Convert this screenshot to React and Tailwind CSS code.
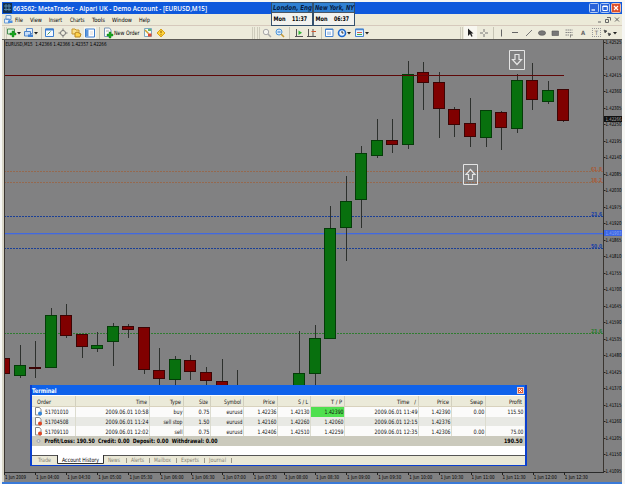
import React from "react";

// Candles: [center x, high, body top, body bottom, low, up?]
const candles = [
  [4.5, 355, 358, 373, 384, 0],
  [20, 345, 365, 375, 378, 1],
  [35.5, 341, 367, 368, 378, 0],
  [51, 308, 315, 367, 367, 1],
  [66.5, 304, 315, 335, 338, 0],
  [82, 334, 334, 346, 358, 0],
  [97.5, 332, 345, 348, 352, 1],
  [113, 323, 326, 341, 366, 1],
  [128.5, 324, 326, 329, 338, 0],
  [144, 327, 327, 369, 374, 0],
  [159.5, 348, 370, 378, 385, 0],
  [175.5, 356, 359, 379, 385, 1],
  [190.5, 355, 360, 371, 380, 0],
  [206, 367, 372, 380, 386, 0],
  [222, 359, 381, 387, 388, 0],
  [237.5, 370, 386, 388, 388, 0],
  [299.5, 331, 373, 388, 388, 1],
  [315, 325, 338, 373, 388, 1],
  [330.5, 206, 228, 338, 338, 1],
  [346, 176, 201, 227, 261, 1],
  [361.5, 146, 153, 199, 228, 1],
  [377, 119, 140, 155, 158, 1],
  [392.5, 119, 140, 144, 153, 0],
  [408, 61, 74, 144, 149, 1],
  [423.5, 62, 72, 82, 110, 0],
  [439, 72, 82, 108, 138, 0],
  [454.5, 107, 109, 124, 137, 0],
  [470.5, 98, 123, 136, 147, 0],
  [486, 110, 110, 137, 147, 1],
  [501.5, 111, 112, 127, 150, 0],
  [517, 74, 80, 128, 133, 1],
  [532.5, 63, 80, 99, 110, 0],
  [548, 81, 90, 101, 104, 1],
  [563.5, 89, 89, 120, 122, 0],
];

const levels = [
  { y: 171, label: "61.8", color: "#a85c38", line: "#95694f" },
  { y: 182, label: "38.2", color: "#a85c38", line: "#95694f" },
  { y: 216, label: "23.6", color: "#1a3fa8", line: "#1a3f96" },
  { y: 248, label: "50.0", color: "#1a3fa8", line: "#1a3f96" },
  { y: 333, label: "23.6", color: "#2c7a2c", line: "#2f7c30" },
];

const prices = Array.from({ length: 27 }, (_, i) => (1.42525 - i * 0.00055).toFixed(5));

const times = [
  "1 Jun 2009", "1 Jun 04:00", "1 Jun 04:30", "1 Jun 05:00", "1 Jun 05:30", "1 Jun 06:00", "1 Jun 06:30",
  "1 Jun 07:00", "1 Jun 07:30", "1 Jun 08:00", "1 Jun 08:30", "1 Jun 09:00", "1 Jun 09:30", "1 Jun 10:00",
  "1 Jun 10:30", "1 Jun 11:00", "1 Jun 11:30", "1 Jun 12:00", "1 Jun 12:30",
];

const orders = [
  ["51701010", "2009.06.01 10:58", "buy", "0.75", "eurusd", "1.42236", "1.42130", "1.42390", "2009.06.01 11:49", "1.42390", "0.00", "115.50"],
  ["51704508", "2009.06.01 11:24", "sell stop", "1.50", "eurusd", "1.42160", "1.42260", "1.42060", "2009.06.01 12:15", "1.42376", "", ""],
  ["51709110", "2009.06.01 12:02", "sell", "0.75", "eurusd", "1.42406", "1.42510", "1.42259", "2009.06.01 12:35", "1.42306", "0.00", "75.00"],
];

const columns = ["Order", "Time", "Type", "Size", "Symbol", "Price", "S / L", "T / P", "Time   /", "Price", "Swap", "Profit"];
const gridCols = "grid grid-cols-[43px_74px_34px_27px_33px_34px_33px_34px_74px_33px_34px_39px]";

const T = ({ x, y, children, size = 6, w, ...rest }) => (
  <text x={x} y={y} fontSize={size} textLength={w} lengthAdjust="spacingAndGlyphs" {...rest}>
    {children}
  </text>
);

const Icon = ({ children, className = "" }) => (
  <svg width="12" height="12" viewBox="0 0 12 12" className={`shrink-0 ${className}`} fill="none">
    {children}
  </svg>
);

const Caret = ({ className = "" }) => (
  <svg width="4" height="12" viewBox="0 0 4 12" className={`shrink-0 ${className}`}>
    <path d="M0 5h4l-2 2.4z" fill="#222" />
  </svg>
);

const Plus = ({ x, y }) => (
  <path d={`M${x} ${y + 2}h2v-2h2v2h2v2h-2v2h-2v-2h-2z`} fill="#19a51d" stroke="#0d8212" strokeWidth=".4" />
);

const Grip = ({ className = "" }) => <div className={`h-3 w-[3px] shrink-0 border-x border-[#cfcdbd] ${className}`} />;
const Sep = ({ className = "" }) => <div className={`h-3 w-px shrink-0 bg-[#c6c4b4] ${className}`} />;

const TitleBar = () => (
  <div className="flex h-3 items-center bg-[#0f59dc] px-px text-white">
    <svg width="9" height="10" viewBox="0 0 9 10" className="shrink-0">
      <rect width="9" height="10" fill="#12304f" />
      <path d="M1 3h7M1 6.5h7M3 1v7M6 1v7" stroke="#5e8fae" strokeWidth=".9" />
    </svg>
    <svg width="240" height="12" className="shrink-0 overflow-visible font-['Open_Sans',sans-serif] font-semibold" fill="white">
      <T x="1" y="8.6" size="7.2" w="194" style={{ whiteSpace: "pre" }}>663562: MetaTrader - Alpari UK - Demo Account - [EURUSD,M15]</T>
    </svg>
    <div className="ml-auto flex gap-[1px]">
      <svg width="10" height="10" viewBox="0 0 10 10"><rect x=".5" y=".5" width="9" height="9" rx="1" fill="#2a62d8" stroke="#b4cdf5" /><path d="M2.5 7h3.5" stroke="#fff" strokeWidth="1.3" /></svg>
      <svg width="10" height="10" viewBox="0 0 10 10"><rect x=".5" y=".5" width="9" height="9" rx="1" fill="#2a62d8" stroke="#b4cdf5" /><path d="M2.8 3h4.5v4.5H2.8zM2.8 3.5h4.5" stroke="#fff" fill="none" /></svg>
      <svg width="10" height="10" viewBox="0 0 10 10"><rect x=".5" y=".5" width="9" height="9" rx="1" fill="#dc4f2c" stroke="#f2c1ae" /><path d="M3 3l4 4M7 3l-4 4" stroke="#fff" strokeWidth="1.2" /></svg>
    </div>
  </div>
);

const MenuBar = () => (
  <div className="flex h-[11px] items-center bg-[#ecead8] text-black">
    <svg width="9" height="9" viewBox="0 0 9 9" className="ml-0.5">
      <path d="M2 .5h5v4H2zM.5 4h5v4h-5z" fill="#e4eefa" stroke="#6b9bd4" />
      <path d="M4 5.5h4.5V8H4z" fill="#4c8fe0" />
    </svg>
    <svg width="150" height="11" className="shrink-0 overflow-visible">
      <T x="2" y="7.6" w="8">File</T>
      <T x="17" y="7.6" w="12">View</T>
      <T x="36" y="7.6" w="13">Insert</T>
      <T x="57" y="7.6" w="14.5">Charts</T>
      <T x="79" y="7.6" w="13">Tools</T>
      <T x="99" y="7.6" w="20">Window</T>
      <T x="126" y="7.6" w="11">Help</T>
    </svg>
    <svg width="25" height="9" viewBox="0 0 25 9" className="ml-auto mr-px" fill="none" stroke="#666">
      <path d="M2 7h3M11 2.5h3.5v3M9.5 4.5h3v3h-3zM19 2.5l4 4M23 2.5l-4 4" />
    </svg>
  </div>
);

const Toolbar = () => (
  <div className="flex h-[15px] items-center border-t border-b border-t-[#d6c9bc] border-b-[#5c5a55] bg-[#edebdb] pl-0.5 text-black">
    <div className="flex w-[248px] shrink-0 items-center">
      <Grip />
      <Icon className="-ml-px"><path d="M1.5 2h7v5h-7z" fill="#d9f0d8" stroke="#4b8f56" /><Plus x={4} y={4} /></Icon>
      <Caret className="-ml-px" />
      <Icon className="ml-0.5"><path d="M3.5 1.5h6v5h-6z" fill="#e5effa" stroke="#6390c8" /><path d="M1.5 4.5h6v4.5h-6z" fill="#c8def7" stroke="#4d85c9" /><path d="M5 7.5h5v2.5H5z" fill="#3e7fd0" /></Icon>
      <Caret className="-ml-px" />
      <Sep className="mr-0.5 ml-[3px]" />
      <Icon><path d="M1.5 2h8v7.5h-8z" fill="#f3f8ff" stroke="#3c7fcf" /><path d="M1.5 2.5h8" stroke="#3c7fcf" strokeWidth="2" /><path d="M3.5 7.5l3-3" stroke="#4d9b54" /></Icon>
      <Icon className="ml-px"><path d="M6 1.5v9M1.5 6h9" stroke="#777" /><circle cx="6" cy="6" r="2.5" fill="#f1efdf" stroke="#777" /></Icon>
      <Icon className="ml-0.5"><path d="M1 2h3l1 1h3v4H1z" fill="#f8df8b" stroke="#c7962c" /><path d="M4 6l2-1 4 2-1 3H4z" fill="#ffd34b" stroke="#b9851e" /></Icon>
      <div className="ml-px flex bg-[#f8f7f0]">
        <Icon><path d="M1.5 2h9v8h-9z" fill="#fff" stroke="#3c7fcf" /><path d="M2 2.5h2.5v7H2z" fill="#5c96dc" /><path d="M6 5h3M6 7h3" stroke="#c8c8c8" strokeWidth=".7" /></Icon>
      </div>
      <Sep className="mr-0.5 ml-[3px]" />
      <Icon><path d="M2.5 1h5l1.5 2v6.5H2.5z" fill="#fafafa" stroke="#7896b5" /><path d="M4 4h3" stroke="#aaa" /><Plus x={5} y={5} /></Icon>
      <svg width="28" height="12" className="shrink-0 overflow-visible"><T x="0" y="8.2" w="25.5">New Order</T></svg>
      <Icon><path d="M2.5 1.5h7v8h-7z" fill="#f5faf5" stroke="#7da8bf" /><path d="M3 3l3.5 3.5" stroke="#d0a12a" strokeWidth="1.5" /><path d="M6 6.5h3.5v3H6z" fill="#de4a31" /><path d="M6 3h3" stroke="#31a142" strokeWidth="1.5" /></Icon>
      <Icon className="ml-px"><path d="M6 2l4 4-4 4-4-4z" fill="#ffd43b" stroke="#d8a21c" /><path d="M6 3.7v2.5M6 7.3v1" stroke="#8a5b00" /></Icon>
    </div>
    <div className="flex w-[208px] shrink-0 items-center">
      <Grip />
      <Grip className="ml-0.5" />
      <Icon className="ml-px"><circle cx="5" cy="5" r="2.7" fill="#f5f5f0" stroke="#aaa" /><path d="M7 7l3 3" stroke="#aaa" strokeWidth="1.5" /></Icon>
      <Icon className="ml-px"><circle cx="5" cy="5" r="3" fill="#d8ecff" stroke="#4c96d8" /><path d="M3.5 5h3" stroke="#2f75c1" /><path d="M7 7l3 3" stroke="#c59b3a" strokeWidth="1.6" /></Icon>
      <Sep className="mx-[3px]" />
      <Icon><path d="M3.5 2v8M2 9.5h8" stroke="#555" /><path d="M5.5 3.5l3.5 2.2-3.5 2.3z" fill="#31b535" /></Icon>
      <Icon className="ml-px"><path d="M2.5 2v8M1 9.5h9M7 2v7" stroke="#555" /><path d="M10 4.5H5.5" stroke="#d05730" /></Icon>
      <Sep className="mr-px ml-[3px]" />
      <Icon><path d="M2.5 2h7.500v7.5h-7.500z" fill="#fff" stroke="#4985cf" /><path d="M2.5 2.5h7.500" stroke="#4985cf" /><path d="M5 4.5v3.5M7 4.5v3.5" stroke="#76a5dc" /></Icon>
      <Icon className="ml-px"><circle cx="6" cy="6" r="3.5" fill="#eaf4ff" stroke="#1d69ce" strokeWidth="1.6" /><path d="M6 4V6h1.5" stroke="#333" /></Icon>
      <Caret className="-ml-px" />
      <Icon className="ml-[3px]"><path d="M1.5 2h8v7.5h-8z" fill="#e8f5ff" stroke="#4985cf" /><path d="M1.5 2.5h8" stroke="#4985cf" strokeWidth="1.5" /><path d="M3 5.5h5" stroke="#d16046" /><path d="M3 7.5h5" stroke="#41a84b" /></Icon>
      <Caret className="-ml-px" />
    </div>
    <div className="flex items-center text-[#666]">
      <Grip />
      <div className="ml-px flex h-[13px] w-[13px] items-center bg-[#f8f7f0]"><Icon><path d="M4 1.5v7.500l2-2 1.400 2.800 1.200-.6L7.3 6.5h2.200z" fill="#222" /></Icon></div>
      <Icon className="ml-px"><path d="M6 2v3M6 7v3M2 6h3M7 6h3" stroke="#777" /></Icon>
      <Sep className="mr-px ml-[3px]" />
      <Icon><path d="M6.5 2.5v7" stroke="#666" /></Icon>
      <Icon className="ml-0.5"><path d="M3 5.5H9" stroke="#666" /></Icon>
      <Icon className="ml-0.5"><path d="M3 9l6-6" stroke="#777" /></Icon>
      <Icon className="ml-px"><ellipse cx="6" cy="6" rx="3.6" ry="2.3" fill="#777" stroke="#555" strokeWidth=".6" /></Icon>
      <Icon className="ml-px"><path d="M3 4h6.5v4.5h-6.500z" fill="#777" stroke="#555" strokeWidth=".6" /></Icon>
      <Icon className="ml-0.5"><path d="M2.5 3h7M2.5 5.5h7M2.5 8h4" stroke="#888" strokeDasharray="1.5 .5" /><path d="M7.5 7.5v3M7.5 8H10" stroke="#666" strokeWidth=".7" /></Icon>
      <div className="ml-0.5 w-3 text-center text-[6px] leading-3 font-bold">A</div>
      <div className="ml-[3px] h-[9px] w-[9px] border border-dotted border-[#999] text-center text-[6px] leading-[7px]">T</div>
      <Icon className="ml-px"><path d="M2 3l3 1-2 2zM6 6l3 1-2 2z" fill="#444" stroke="#444" strokeWidth=".6" /></Icon>
      <Caret className="-ml-px" />
    </div>
  </div>
);

const Clock = ({ city, time, w }) => (
  <div className="w-[42px] border border-[#34506c]">
    <svg width="40" height="22" className="block overflow-visible">
      <rect width="40" height="9" fill="#2f80d2" />
      <rect y="9" width="40" height="13" fill="#f2f2ee" />
      <path d="M0 9.5h40" stroke="#4c5560" />
      <T x="1" y="7.4" w={w} size="6.8" fontWeight="bold" fontStyle="italic" fill="#071b42">{city}</T>
      <T x="1.5" y="18.2" w="12" size="6.2" fontWeight="bold">Mon</T>
      <T x="20" y="18.2" w="15" size="6.4" fontWeight="bold">{time}</T>
    </svg>
  </div>
);

const Chart = () => (
  <svg width="600" height="432" viewBox="4 40 600 432" className="block shrink-0 bg-[#818182]">
    {levels.map((l) => (
      <g key={l.y}>
        <path d={`M4 ${l.y + 0.5}H603`} stroke={l.line} strokeDasharray="2 1" />
        <T x="591" y={l.y} w="11" size="5.4" fill={l.color} fontWeight="bold">{l.label}</T>
      </g>
    ))}
    <rect x="4" y="233" width="599" height="1" fill="#4169e1" />
    <rect x="4" y="234" width="599" height="1" fill="#4169e1" opacity=".3" />
    {candles.map(([x, high, top, bottom, low, up]) => (
      <g key={x}>
        <path d={`M${Math.floor(x) + 0.5} ${high}V${low}`} stroke="#2d302d" />
        <rect x={Math.floor(x) - 5.5} y={top + 0.5} width="11" height={Math.max(bottom - top, 1)} fill={up ? "#08700e" : "#800000"} stroke={up ? "#043c08" : "#3c0404"} />
      </g>
    ))}
    <path d="M4 75.5H564" stroke="#5e0808" />
    <g fill="none" stroke="#e4e4e4">
      <path d="M509.5 50.5h15v19h-15zM463.5 164.5h14v20h-14z" />
      <path d="M515 54.5h4v5h2.5l-4.5 5-4.5-5h2.5zM468.5 179.5h4v-5h2.5l-4.5-5-4.5 5h2.5z" strokeWidth="1.2" />
    </g>
    <T x="5.5" y="45.7" w="101" size="5.5" style={{ whiteSpace: "pre" }}>EURUSD,M15  1.42366 1.42366 1.42357 1.42266</T>
    <path d="M4.5 40V472M603.5 40V472" stroke="#3a3530" />
  </svg>
);

const PriceScale = () => (
  <svg width="18" height="432" viewBox="604 40 18 432" className="block shrink-0 overflow-visible bg-[#818182]">
    {prices.map((p, i) => (
      <g key={p}>
        <path d={`M604 ${Math.round(41.5 + i * 16.5) + 0.5}h1.5`} stroke="#222" />
        <T x="605.5" y={43.6 + i * 16.5} w="16" size="5.3" fill="#000">{p}</T>
      </g>
    ))}
    <rect x="604" y="116" width="18" height="6" fill="#111" />
    <T x="605.5" y="121" w="16" size="5.3" fill="#aaa">1.42266</T>
    <rect x="604" y="230" width="18" height="6" fill="#3c66e4" />
    <T x="605.5" y="235" w="16" size="5.3" fill="#8ba6f2">1.41903</T>
  </svg>
);

const TimeScale = () => (
  <svg width="618" height="10" viewBox="4 472 618 10" className="block overflow-visible bg-[#818182]">
    <path d="M4 472.5H604" stroke="#2a2a2a" />
    {times.map((t, i) => (
      <g key={t}>
        <path d={`M${Math.round(4 + i * 31.1) + 0.5} 472v3`} stroke="#222" />
        <T x={5 + i * 31.1} y="479.2" w={i ? 23 : 21} size="5.4" fill="#000">{t}</T>
      </g>
    ))}
  </svg>
);

const Cell = ({ children, w, hit }) => (
  <div className={`flex items-center justify-end border-r border-[#dcdccf] ${hit ? "bg-[#4fe04f]" : ""}`}>
    <svg width={w} height="9" className="block shrink-0 overflow-visible">
      <T x="-0.5" y="6.8" w={w} fill="#111">{children}</T>
    </svg>
  </div>
);

const widths = [23, 43, 0, 11, 16, 19, 19, 19, 43, 19, 11, 16];
const typeWidths = { buy: 9, "sell stop": 19, sell: 8 };
const headWidths = [14, 11, 11, 9, 17, 12, 10, 11, 19, 12, 13, 13];

const OrderIcon = ({ buy }) => (
  <svg width="9" height="9" viewBox="0 0 9 9" className="mr-[2px] ml-px shrink-0">
    <path d="M1.5 .5h4l1.5 2v5.5h-5.5z" fill="#fff" stroke="#888" />
    <circle cx="6" cy="6.5" r="2" fill={buy ? "#2f83da" : "#e0431f"} />
  </svg>
);

const tabs = [
  ["Trade", 13, 38],
  ["News", 12, 108],
  ["Alerts", 13, 131],
  ["Mailbox", 17, 154],
  ["Experts", 18, 181],
  ["Journal", 17, 209],
];

const Terminal = () => (
  <div className="absolute top-[385px] left-[30px] flex h-[81px] w-[497px] flex-col border-2 border-t-0 border-[#0a3fcf] bg-white">
    <div className="flex h-2.5 shrink-0 items-center justify-between bg-[#0f62ea]">
      <svg width="30" height="10" className="overflow-visible"><T x="0" y="7.6" w="24.5" size="6.4" fontWeight="bold" fill="#fff">Terminal</T></svg>
      <svg width="7" height="7" viewBox="0 0 7 7" className="mr-px">
        <rect x=".5" y=".5" width="6" height="6" fill="#e0603d" stroke="#f6cdbd" />
        <path d="M2 2l3 3M5 2l-3 3" stroke="#fff" />
      </svg>
    </div>
    <div className={`${gridCols} mt-px h-[11px] shrink-0 border-b border-[#d8d2bd] bg-[#ebead9] pl-px`}>
      {columns.map((c, i) => (
        <div key={i} className={`flex items-center border-r border-[#d2d0bf] ${i ? "justify-end pr-0.5" : "pl-1"}`}>
          <svg width={headWidths[i]} height="9" className="shrink-0 overflow-visible"><T x="0" y="6.9" w={headWidths[i]} fill="#111" style={{ whiteSpace: "pre" }}>{c}</T></svg>
        </div>
      ))}
    </div>
    {orders.map((o, r) => (
      <div key={o[0]} className={`${gridCols} h-[9.7px] shrink-0 pl-px ${r === 1 ? "bg-[#e8e9e4]" : "bg-[#fbfbfa]"}`}>
        {o.map((v, i) =>
          i === 0 ? (
            <div key={i} className="flex items-center border-r border-[#dcdccf]">
              <OrderIcon buy={r === 0} />
              <svg width="25" height="9" className="overflow-visible"><T x="0" y="6.8" w="23.5" fill="#111">{v}</T></svg>
            </div>
          ) : (
            <Cell key={i} w={i === 2 ? typeWidths[v] : i === 11 && r === 2 ? 13 : widths[i]} hit={r === 0 && i === 7}>{v}</Cell>
          )
        )}
      </div>
    ))}
    <div className="flex h-[10px] shrink-0 items-center justify-between bg-[#cbcabd]">
      <svg width="230" height="10" className="overflow-visible">
        <circle cx="6.5" cy="5" r="1.5" fill="#ddd" stroke="#8a93a8" strokeWidth=".7" />
        <T x="12.5" y="7.3" w="173" fontWeight="bold" style={{ whiteSpace: "pre" }}>Profit/Loss: 190.50  Credit: 0.00  Deposit: 0.00  Withdrawal: 0.00</T>
      </svg>
      <svg width="22" height="10" className="overflow-visible"><T x="1" y="7.3" w="18.5" fontWeight="bold">190.50</T></svg>
    </div>
    <div className="h-[9px] shrink-0 bg-white" />
    <svg width="493" height="10" viewBox="32 454 493 10" className="block shrink-0 bg-[#eae8d6]">
      <path d="M32 454.5H525" stroke="#555" />
      {tabs.map(([t, w, x]) => (
        <T key={t} x={x} y="461" w={w} fill="#858274">{t}</T>
      ))}
      <path d="M126.5 457v5M149.5 457v5M176.5 457v5M204.5 457v5M231.5 457v5" stroke="#9b988a" />
      <path d="M57.5 454v8.5h46V454z" fill="#fff" />
      <path d="M57.5 454v8.5h46V454" fill="none" stroke="#333" />
      <T x="62" y="461" w="37">Account History</T>
    </svg>
  </div>
);

export default function App() {
  return (
    <div className="relative h-[484px] w-[625px] overflow-hidden bg-[#f6f6f3] pt-0.5 font-['DejaVu_Sans_Condensed','DejaVu_Sans',sans-serif]">
      <div className="ml-0.5 w-[620px]">
        <TitleBar />
        <MenuBar />
        <Toolbar />
      </div>
      <div className="ml-0.5 w-[620px] border-l-2 border-[#d9d6c8]">
        <div className="flex">
          <Chart />
          <PriceScale />
        </div>
        <TimeScale />
      </div>
      <div className="ml-0.5 h-1 w-[620px] bg-[#3a7ad8]" />
      <div className="absolute top-0.5 left-[271px] flex">
        <Clock city="London, Eng" time="11:37" w="39" />
        <Clock city="New York, NY" time="06:37" w="39" />
      </div>
      <Terminal />
    </div>
  );
}
